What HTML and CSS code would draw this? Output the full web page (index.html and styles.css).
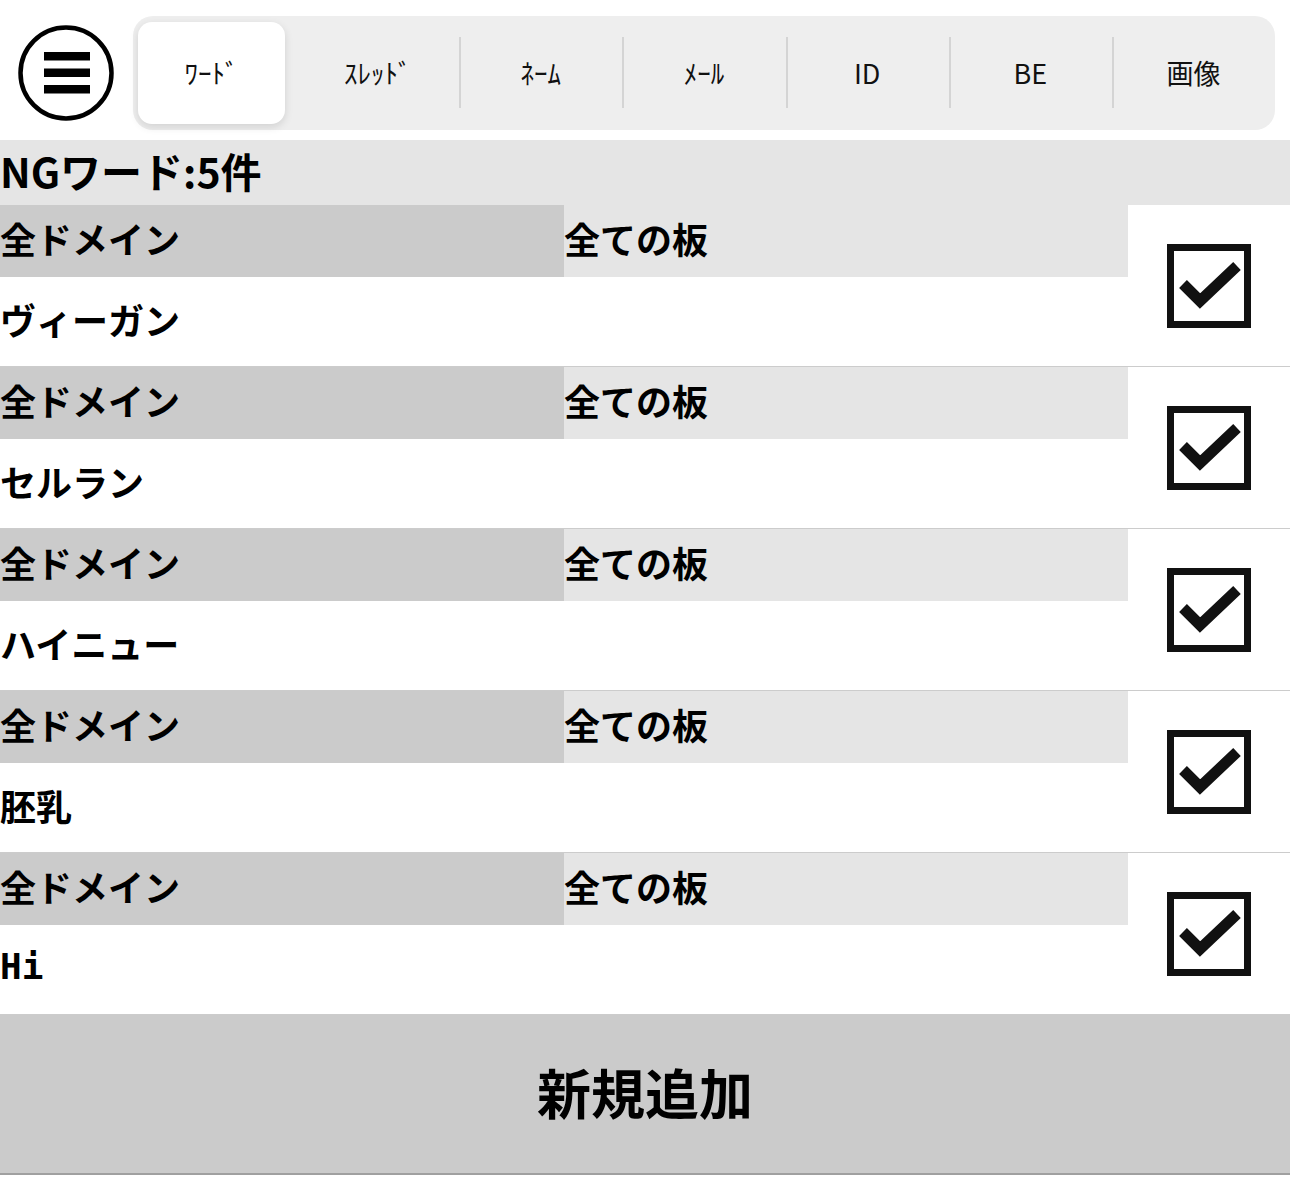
FILE: index.html
```html
<!DOCTYPE html>
<html lang="ja">
<head>
  <meta charset="UTF-8" />
  <meta name="viewport" content="width=device-width, initial-scale=1.0" />
  <title>NG設定</title>
  <link rel="stylesheet" href="styles.css">
</head>
<body>
  <div class="topbar">
    <div class="menu-btn">
      <svg width="96" height="96" viewBox="0 0 96 96">
        <circle cx="48" cy="48" r="45.5" fill="none" stroke="#000" stroke-width="4.5"/>
        <rect x="26" y="27" width="46" height="8.5" fill="#000"/>
        <rect x="26" y="43.5" width="46" height="8.5" fill="#000"/>
        <rect x="26" y="60" width="46" height="8.5" fill="#000"/>
      </svg>
    </div>
    <div class="segments">
      <div class="seg selected">ﾜｰﾄﾞ</div>
      <div class="seg">ｽﾚｯﾄﾞ</div>
      <div class="seg sep">ﾈｰﾑ</div>
      <div class="seg sep">ﾒｰﾙ</div>
      <div class="seg sep">ID</div>
      <div class="seg sep">BE</div>
      <div class="seg sep">画像</div>
    </div>
  </div>

  <div class="list-title">NGワード:5件</div>

  <div class="ng-list" id="list"></div>

  <div class="add-btn">新規追加</div>

  <script>
    const words = ['ヴィーガン', 'セルラン', 'ハイニュー', '胚乳', 'Hi'];
    const check = '<svg width="84" height="84" viewBox="0 0 84 84">' +
      '<rect x="3.5" y="3.5" width="77" height="77" fill="#fff" stroke="#111" stroke-width="7"/>' +
      '<path d="M16 40 L33 57 L70 22" fill="none" stroke="#111" stroke-width="11" stroke-linejoin="miter"/>' +
      '</svg>';
    const list = document.getElementById('list');
    words.forEach(w => {
      const row = document.createElement('div');
      row.className = 'ng-row';
      row.innerHTML =
        '<div class="domain">全ドメイン</div>' +
        '<div class="board">全ての板</div>' +
        '<div class="word">' + w + '</div>' +
        '<div class="toggle">' + check + '</div>';
      list.appendChild(row);
    });
  </script>
</body>
</html>
```

FILE: styles.css
```css
body {
  margin: 0;
  background: #fff;
  font-family: "Noto Sans CJK JP", "Noto Sans", sans-serif;
  color: #000;
}
.topbar {
  display: flex;
  align-items: center;
  height: 140px;
  box-sizing: border-box;
  padding-top: 6px;
}
.menu-btn {
  width: 96px;
  height: 96px;
  margin-left: 18px;
}
.menu-btn svg {
  display: block;
}
.segments {
  margin-left: 19px;
  width: 1142px;
  height: 114px;
  background: #eeeeee;
  border-radius: 20px;
  display: grid;
  grid-template-columns: repeat(7, 1fr);
}
.seg {
  position: relative;
  display: flex;
  align-items: center;
  justify-content: center;
  font-size: 27px;
  color: #111;
  padding-bottom: 2px;
}
.seg.sep::before {
  content: "";
  position: absolute;
  left: 0;
  top: 21px;
  bottom: 22px;
  width: 2px;
  background: #d4d4d4;
}
.seg.selected {
  background: #fff;
  margin: 6px 11px 6px 5px;
  border-radius: 14px;
  box-shadow: 0 3px 8px rgba(0,0,0,0.12);
}
.list-title {
  height: 65px;
  box-sizing: border-box;
  padding-bottom: 6px;
  background: #e5e5e5;
  font-size: 41px;
  font-weight: bold;
  display: flex;
  align-items: center;
}
.ng-row {
  display: grid;
  grid-template-columns: 564px 564px 162px;
  grid-template-rows: 72px 89px;
  border-bottom: 1px solid #cccccc;
}
.domain, .board, .word {
  display: flex;
  align-items: center;
  font-size: 36px;
  font-weight: bold;
  padding-bottom: 6px;
}
.domain {
  background: #cbcbcb;
}
.board {
  background: #e5e5e5;
}
.word {
  grid-column: 1 / 3;
  font-family: "DejaVu Sans Mono", "Noto Sans CJK JP", monospace;
}
.toggle {
  grid-column: 3;
  grid-row: 1 / 3;
  display: flex;
  align-items: center;
  justify-content: center;
}
.toggle svg {
  display: block;
}
.add-btn {
  height: 160px;
  box-sizing: border-box;
  padding-bottom: 6px;
  background: #cbcbcb;
  border-bottom: 2px solid #a0a0a0;
  display: flex;
  align-items: center;
  justify-content: center;
  font-size: 54px;
  font-weight: bold;
}
```
